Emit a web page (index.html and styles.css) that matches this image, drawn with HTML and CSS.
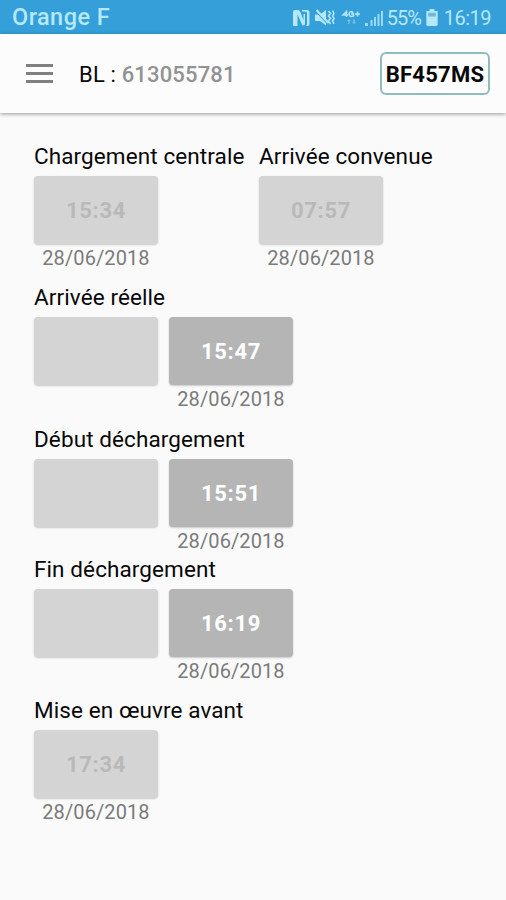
FILE: index.html
```html
<!DOCTYPE html>
<html lang="fr">
<head>
<meta charset="utf-8">
<title>BL 613055781</title>
<link rel="stylesheet" href="styles.css">
</head>
<body>
<div class="status">
  <span class="carrier">Orange F</span>
  <svg class="status-icons" width="94" height="20" viewBox="0 0 94 20" fill="currentColor">
    <path d="M2 18V4q0-2 2-2h2.500q2 0 3 2.200l3 8V6H14v9.500q0 2-1.500 2-1.300 0-2-1.700L6.500 6v12zM11 2h5q2.500 0 2.500 2.500v11q0 2.500-2.500 2.500h-1q1-1 1-2.500V5q0-1.500-2-1.500h-3z"/>
    <path d="M24 6.500h5l6-4.500v15.500l-6-4.500h-5z"/>
    <path d="M24.500 3L37 16" fill="none" stroke="#359fda" stroke-width="1.500"/>
    <path d="M25.500 2L37.500 15" fill="none" stroke="currentColor" stroke-width="2"/>
    <path d="M37.500 3l2 2.500-2 2.500 2 2.500-2 2.500 2 3M41.500 2.500l1.500 3-1.500 2.500 1.500 2.500-1.500 2.500 1.500 3" fill="none" stroke="currentColor" stroke-width="1.500"/>
    <path d="M55.500 9V3.500L52 7h5M62.500 4.500Q58 2.500 58 6t4.500 2V6H60M64 6h5M66.500 3.500v5" fill="none" stroke="currentColor" stroke-width="1.500"/>
    <path d="M58 11l2 2h-1.300v3h-1.400v-3H56zM63 16l-2-2h1.300v-3h1.400v3H65z" opacity=".5"/>
    <path d="M74 15h3v3h-3zM79.500 12h2v6h-2zM83 9h2v9h-2zM86.500 6h2v12h-2zM90 3h2v15h-2z" opacity=".8"/>
  </svg>
  <span class="percent">55%</span>
  <svg class="battery" width="12" height="17" viewBox="0 0 12 18" fill="currentColor">
    <path d="M3.500 0h5v2H12v14.500q0 1.500-1.500 1.500h-9Q0 18 0 16.500V2h3.500z"/>
    <path d="M2 4h8v4H2z" fill="#6fb9df"/>
  </svg>
  <span class="clock">16:19</span>
</div>
<header class="appbar">
  <svg class="menu" width="27" height="20" viewBox="0 0 27 20" fill="#808080"><path d="M0 0h27v3H0zM0 8h27v3H0zM0 16h27v3H0z"/></svg>
  <div class="bl">BL : <b>613055781</b></div>
  <div class="plate">BF457MS</div>
</header>
<main>
  <section class="row">
    <div class="step wide"><h2>Chargement centrale</h2><div class="slots"><div class="slot"><div class="box">15:34</div><time>28/06/2018</time></div></div></div>
    <div class="step"><h2>Arrivée convenue</h2><div class="slots"><div class="slot"><div class="box">07:57</div><time>28/06/2018</time></div></div></div>
  </section>
  <section class="step"><h2>Arrivée réelle</h2><div class="slots"><div class="slot"><div class="box"></div></div><div class="slot"><div class="box done">15:47</div><time>28/06/2018</time></div></div></section>
  <section class="step tight"><h2>Début déchargement</h2><div class="slots"><div class="slot"><div class="box"></div></div><div class="slot"><div class="box done">15:51</div><time>28/06/2018</time></div></div></section>
  <section class="step"><h2>Fin déchargement</h2><div class="slots"><div class="slot"><div class="box"></div></div><div class="slot"><div class="box done">16:19</div><time>28/06/2018</time></div></div></section>
  <section class="step"><h2>Mise en œuvre avant</h2><div class="slots"><div class="slot"><div class="box">17:34</div><time>28/06/2018</time></div></div></section>
</main>
</body>
</html>
```

FILE: styles.css
```css
* { box-sizing: border-box; }
body { margin: 0; height: 900px; overflow: hidden; background: #fafafa; font-family: Roboto, sans-serif; color: #080808; }
.status { height: 34px; background: #359fda; color: #b5e8fa; display: flex; align-items: center; padding: 1px 15px 0 12px; }
.carrier { font-size: 23.5px; font-weight: 500; letter-spacing: .45px; padding-bottom: 2px; flex: 1; }
.status-icons { margin-right: 2px; }
.percent { font-size: 20px; width: 35px; letter-spacing: -.9px; }
.battery { margin: 0 6px 0 4px; }
.clock { font-size: 20px; letter-spacing: -.5px; }
.appbar { height: 79px; background: #fcfcfc; display: flex; align-items: center; padding: 0 16px 0 26px; box-shadow: 0 1px 4px rgba(0,0,0,.4); }
.menu { margin-right: 26px; }
.bl { font-size: 22px; letter-spacing: .17px; padding-top: 1px; flex: 1; }
.bl b { font-weight: 500; color: #929292; }
.plate { width: 110px; height: 43px; border: 2px solid #8fbcbc; border-radius: 6px; font-size: 22px; font-weight: 700; line-height: 41px; letter-spacing: .25px; text-align: center; white-space: nowrap; }
main { padding: 29px 34px 0; }
.row { display: flex; }
.wide { width: 225px; }
.step { height: 141px; }
.row + .step { height: 142px; }
.step.tight { height: 130px; }
h2 { margin: 0; height: 34px; font-size: 22.5px; line-height: 28px; font-weight: 400; letter-spacing: .1px; white-space: nowrap; }
.slots { display: flex; gap: 11px; }
.slot { width: 124px; text-align: center; }
.box { height: 68px; border-radius: 4px; background: #d4d4d4; color: #b9b9b9; font-size: 22px; font-weight: 700; line-height: 69px; letter-spacing: .7px; box-shadow: 0 1px 2px rgba(0,0,0,.2); }
.done { background: #b5b5b5; color: #fff; }
time { display: block; font-size: 20px; line-height: 28px; letter-spacing: .1px; color: #7b7b7b; }
```
